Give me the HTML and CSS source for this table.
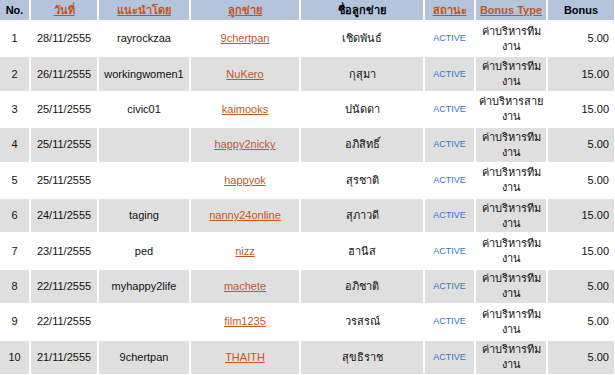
FILE: index.html
```html
<!DOCTYPE html>
<html lang="th">
<head>
<meta charset="utf-8">
<title>ลูกข่าย</title>
<link rel="stylesheet" href="styles.css">
</head>
<body>
<table class="grid">
  <colgroup>
    <col class="c-no"><col class="c-date"><col class="c-ref"><col class="c-user"><col class="c-name"><col class="c-status"><col class="c-type"><col class="c-bonus">
  </colgroup>
  <thead>
    <tr class="head">
      <th>No.</th>
      <th><a href="#" class="hlink">วันที่</a></th>
      <th><a href="#" class="hlink">แนะนำโดย</a></th>
      <th><a href="#" class="hlink">ลูกข่าย</a></th>
      <th>ชื่อลูกข่าย</th>
      <th><a href="#" class="hlink">สถานะ</a></th>
      <th><a href="#" class="hlink">Bonus Type</a></th>
      <th>Bonus</th>
    </tr>
  </thead>
  <tbody>
    <tr class="row odd"><td>1</td><td>28/11/2555</td><td>rayrockzaa</td><td><a href="#" class="ulink">9chertpan</a></td><td>เชิดพันธ์</td><td class="status">ACTIVE</td><td>ค่าบริหารทีม งาน</td><td class="num">5.00</td></tr>
    <tr class="row even"><td>2</td><td>26/11/2555</td><td>workingwomen1</td><td><a href="#" class="ulink">NuKero</a></td><td>กุสุมา</td><td class="status">ACTIVE</td><td>ค่าบริหารทีม งาน</td><td class="num">15.00</td></tr>
    <tr class="row odd"><td>3</td><td>25/11/2555</td><td>civic01</td><td><a href="#" class="ulink">kaimooks</a></td><td>ปนัดดา</td><td class="status">ACTIVE</td><td>ค่าบริหารสาย งาน</td><td class="num">15.00</td></tr>
    <tr class="row even"><td>4</td><td>25/11/2555</td><td></td><td><a href="#" class="ulink">happy2nicky</a></td><td>อภิสิทธิ์</td><td class="status">ACTIVE</td><td>ค่าบริหารทีม งาน</td><td class="num">5.00</td></tr>
    <tr class="row odd"><td>5</td><td>25/11/2555</td><td></td><td><a href="#" class="ulink">happyok</a></td><td>สุรชาติ</td><td class="status">ACTIVE</td><td>ค่าบริหารทีม งาน</td><td class="num">5.00</td></tr>
    <tr class="row even"><td>6</td><td>24/11/2555</td><td>taging</td><td><a href="#" class="ulink">nanny24online</a></td><td>สุภาวดี</td><td class="status">ACTIVE</td><td>ค่าบริหารทีม งาน</td><td class="num">15.00</td></tr>
    <tr class="row odd"><td>7</td><td>23/11/2555</td><td>ped</td><td><a href="#" class="ulink">nizz</a></td><td>ฮานีส</td><td class="status">ACTIVE</td><td>ค่าบริหารทีม งาน</td><td class="num">15.00</td></tr>
    <tr class="row even"><td>8</td><td>22/11/2555</td><td>myhappy2life</td><td><a href="#" class="ulink">machete</a></td><td>อภิชาติ</td><td class="status">ACTIVE</td><td>ค่าบริหารทีม งาน</td><td class="num">5.00</td></tr>
    <tr class="row odd"><td>9</td><td>22/11/2555</td><td></td><td><a href="#" class="ulink">film1235</a></td><td>วรสรณ์</td><td class="status">ACTIVE</td><td>ค่าบริหารทีม งาน</td><td class="num">5.00</td></tr>
    <tr class="row even"><td>10</td><td>21/11/2555</td><td>9chertpan</td><td><a href="#" class="ulink">THAITH</a></td><td>สุขธิราช</td><td class="status">ACTIVE</td><td>ค่าบริหารทีม งาน</td><td class="num">5.00</td></tr>
  </tbody>
</table>
</body>
</html>
```

FILE: styles.css
```css
html, body {
  margin: 0;
  padding: 0;
  background: #ffffff;
  overflow: hidden;
}

body {
  font-family: Tahoma, "Liberation Sans", Arial, sans-serif;
  font-size: 11px;
  color: #111111;
}

.grid {
  border-collapse: separate;
  border-spacing: 2px;
  table-layout: fixed;
  width: 618px;
  margin: -2px 0 0 -2px;
  background: #ffffff;
}

.c-no { width: 29px; }
.c-date { width: 66px; }
.c-ref { width: 90px; }
.c-user { width: 108px; }
.c-name { width: 122px; }
.c-status { width: 49px; }
.c-type { width: 70px; }
.c-bonus { width: 66px; }

.head th {
  background: #b3c4dc;
  height: 20px;
  padding: 0;
  font-weight: bold;
  font-size: 11px;
  color: #000000;
  text-align: center;
  vertical-align: middle;
}

.hlink {
  color: #c4541c;
  text-decoration: underline;
}

.row td {
  height: 33.4px;
  padding: 0;
  text-align: center;
  vertical-align: middle;
  line-height: 15px;
}

.row.odd td { background: #ffffff; }
.row.even td { background: #dfdfdf; }

.ulink {
  color: #c5561f;
  text-decoration: underline;
}

.row td.status {
  color: #2f74d6;
  font-size: 9px;
}

.row td.num {
  text-align: right;
  padding-right: 5px;
}
```
